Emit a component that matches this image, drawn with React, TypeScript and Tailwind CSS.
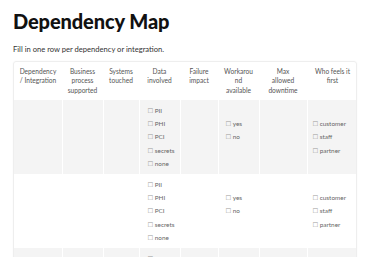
import React from 'react';

const columns = [
  { label: ['Dependency', '/ Integration'], width: 48 },
  { label: ['Business', 'process', 'supported'], width: 41 },
  { label: ['Systems', 'touched'], width: 36 },
  { label: ['Data', 'involved'], width: 41 },
  { label: ['Failure', 'impact'], width: 38 },
  { label: ['Workarou', 'nd', 'available'], width: 41 },
  { label: ['Max', 'allowed', 'downtime'], width: 48 },
  { label: ['Who feels it', 'first'], width: 51 },
];

const dataOptions = ['PII', 'PHI', 'PCI', 'secrets', 'none'];
const workaroundOptions = ['yes', 'no'];
const whoOptions = ['customer', 'staff', 'partner'];

function CheckList({ items, slots }: { items: string[]; slots?: number }) {
  const pad = (slots ?? items.length) - items.length;
  return (
    <div className="flex flex-col">
      {items.map((item) => (
        <div key={item} className="h-[13.4px] leading-[13.4px] whitespace-nowrap">
          <span className="font-['DejaVu_Sans',sans-serif] text-[6.4px] text-[#999] mr-[1.5px]">☐</span>
          {item}
        </div>
      ))}
      {Array.from({ length: pad }).map((_, i) => (
        <div key={i} className="h-[13.4px]" />
      ))}
    </div>
  );
}

export default function App() {
  const rows = [0, 1, 2];

  return (
    <div className="bg-white min-h-screen px-[13px] pt-[7px] font-['Lato',sans-serif]">
      <h1 className="text-[20px] leading-[28px] font-black text-[#111] tracking-[-0.1px]">
        Dependency Map
      </h1>
      <p className="mt-[9px] text-[7.6px] leading-[10px] text-[#333]">
        Fill in one row per dependency or integration.
      </p>

      <div className="mt-[7px] w-[344px] border border-[#eeeeee] rounded-[3px] shadow-[0_0_2px_rgba(0,0,0,0.04)] overflow-hidden">
        <table className="w-full table-fixed border-collapse">
          <colgroup>
            {columns.map((c, i) => (
              <col key={i} style={{ width: c.width }} />
            ))}
          </colgroup>
          <thead>
            <tr className="h-[38px]">
              {columns.map((c, i) => (
                <th
                  key={i}
                  className="align-top text-center font-normal text-[6.6px] leading-[9.7px] text-[#555] px-[3px] pt-[4.5px] pb-0"
                >
                  {c.label.map((l) => (
                    <div key={l}>{l}</div>
                  ))}
                </th>
              ))}
            </tr>
          </thead>
          <tbody className="text-[6.4px] text-[#666]">
            {rows.map((r) => (
              <tr key={r} className={r % 2 === 0 ? 'bg-[#f4f4f4] h-[74px]' : 'bg-white h-[74px]'}>
                <td className="border-r border-white p-0" />
                <td className="border-r border-white p-0" />
                <td className="border-r border-white p-0" />
                <td className="border-r border-white align-middle p-0 pl-[8px]">
                  <CheckList items={dataOptions} />
                </td>
                <td className="border-r border-white p-0" />
                <td className="border-r border-white align-middle p-0 pl-[7px]">
                  <CheckList items={workaroundOptions} slots={3} />
                </td>
                <td className="border-r border-white p-0" />
                <td className="align-middle p-0 pl-[5px]">
                  <CheckList items={whoOptions} />
                </td>
              </tr>
            ))}
          </tbody>
        </table>
      </div>
    </div>
  );
}
